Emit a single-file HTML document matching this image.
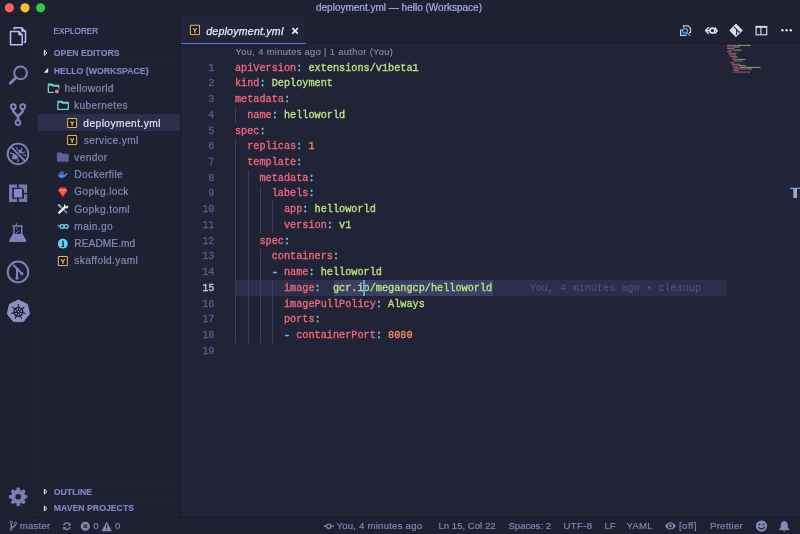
<!DOCTYPE html>
<html lang="en">
<head>
<meta charset="utf-8">
<title>deployment.yml — hello (Workspace)</title>
<style>
html,body{margin:0;padding:0;}
body{width:800px;height:534px;position:relative;overflow:hidden;background:#212337;font-family:"Liberation Sans",sans-serif;color:#828bb8;-webkit-font-smoothing:antialiased;}
.abs{position:absolute;}
#titlebar{left:0;top:0;width:800px;height:16px;background:#1e2132;border-bottom:1px solid #1a1c2c;box-sizing:border-box;}
#title{left:0;top:0;width:800px;height:16px;line-height:16px;text-align:center;padding-right:2px;box-sizing:border-box;font-size:10px;color:#a7afe3;-webkit-text-stroke:0.2px;white-space:nowrap;}
#activity{left:0;top:16px;width:37px;height:501px;background:#1e2132;}
#sidebar{left:37px;top:16px;width:143px;height:501px;background:#1e2132;border-left:1px solid #212438;box-sizing:border-box;}
#editor{left:180px;top:16px;width:620px;height:501px;background:#212337;border-left:1px solid #1a1c2b;box-sizing:border-box;}
#tabbar{left:181px;top:16px;width:619px;height:28px;background:#1e2132;border-bottom:1px solid #191a2a;box-sizing:border-box;}
#tab{left:181px;top:16px;width:124px;height:27px;background:#222438;border-right:1px solid #191a2a;}
#tabline{left:181px;top:42.6px;width:124.5px;height:1.4px;background:#5b78e0;}
#tabname{left:206.2px;top:22.6px;height:16px;line-height:16px;font-size:10.6px;font-style:italic;color:#e6eafd;-webkit-text-stroke:0.25px;letter-spacing:0.22px;white-space:nowrap;}
#status{left:0;top:517px;width:800px;height:17px;background:#1e2132;border-top:1px solid #191a2a;box-sizing:border-box;}
.st{top:516.6px;-webkit-text-stroke:0.15px;height:17px;line-height:17px;font-size:9.6px;color:#828bb8;white-space:nowrap;}
.hdr{-webkit-text-stroke:0.15px;left:53.8px;height:14px;line-height:14px;font-size:8.7px;font-weight:bold;color:#8088c0;white-space:nowrap;letter-spacing:0.02px;}
.row{height:17.3px;line-height:17.3px;-webkit-text-stroke:0.2px;font-size:10.2px;color:#828bb8;white-space:nowrap;letter-spacing:0.35px;}
.sep{left:38px;width:140px;height:1px;background:#212337;}
#sel{left:38px;top:114px;width:142px;height:17px;background:#2c2f4b;}
.code{font-family:"Liberation Mono",monospace;font-size:10.215px;white-space:pre;height:15.72px;line-height:15.72px;-webkit-text-stroke:0.3px;margin-top:0.8px;}
.ln{left:190px;width:24.4px;text-align:right;color:#555c8e;}
.cl{left:235px;}
.k{color:#f8687c;}
.p{color:#6cd6f5;}
.s{color:#bbe682;}
.n{color:#fb8c60;}
.d{-webkit-text-stroke:0.7px;color:#5ec3df;}
.guide{width:1px;background:#3a3f63;}
#lens{left:235.6px;top:44.5px;height:15px;line-height:15px;font-size:9.3px;color:#8e909f;-webkit-text-stroke:0.12px;white-space:nowrap;letter-spacing:0.35px;}
</style>
</head>
<body>
<div id="root" class="abs" style="left:0;top:0;width:800px;height:534px;will-change:transform;">
<div id="titlebar" class="abs"></div>
<div id="title" class="abs">deployment.yml — hello (Workspace)</div>

<div id="activity" class="abs"></div>
<div id="sidebar" class="abs"></div>
<div id="editor" class="abs"></div>
<div id="tabbar" class="abs"></div>
<div id="tab" class="abs"></div>
<div id="tabline" class="abs"></div>
<div id="tabname" class="abs">deployment.yml</div>

<!-- sidebar content -->
<div class="abs" style="left:53.6px;top:25.1px;height:14px;line-height:14px;font-size:8.2px;color:#959ddb;-webkit-text-stroke:0.2px;white-space:nowrap;">EXPLORER</div>
<div class="abs hdr" style="top:45.9px;">OPEN EDITORS</div>
<div class="abs sep" style="top:61px;"></div>
<div class="abs hdr" style="top:63.6px;">HELLO (WORKSPACE)</div>
<div id="sel" class="abs"></div>
<div class="abs row" style="left:64.5px;top:80.15px;">helloworld</div>
<div class="abs row" style="left:74px;top:97.15px;">kubernetes</div>
<div class="abs row" style="left:83.3px;top:115.15px;color:#dfe4fb;letter-spacing:0.45px;">deployment.yml</div>
<div class="abs row" style="left:83.8px;top:132.15px;">service.yml</div>
<div class="abs row" style="left:74.3px;top:149.15px;">vendor</div>
<div class="abs row" style="left:74.3px;top:166.15px;">Dockerfile</div>
<div class="abs row" style="left:74.3px;top:183.15px;">Gopkg.lock</div>
<div class="abs row" style="left:74.3px;top:201.15px;">Gopkg.toml</div>
<div class="abs row" style="left:74.3px;top:218.15px;">main.go</div>
<div class="abs row" style="left:74.3px;top:235.15px;letter-spacing:0.05px;">README.md</div>
<div class="abs row" style="left:74.3px;top:252.15px;">skaffold.yaml</div>
<div class="abs sep" style="top:483px;"></div>
<div class="abs hdr" style="top:484.5px;">OUTLINE</div>
<div class="abs sep" style="top:500px;"></div>
<div class="abs hdr" style="top:501.4px;">MAVEN PROJECTS</div>

<!-- editor content -->
<div id="lens" class="abs">You, 4 minutes ago | 1 author (You)</div>
<div class="abs" style="left:235.4px;top:280px;width:491.4px;height:15.7px;background:#2c2f4b;"></div>
<div class="abs" style="left:333.5px;top:280px;width:159.4px;height:15.7px;background:#3a4066;"></div>
<div class="abs guide" style="left:235.2px;top:107.1px;height:15.7px;"></div>
<div class="abs guide" style="left:235.2px;top:138.5px;height:204.4px;"></div>
<div class="abs guide" style="left:247.6px;top:169.9px;height:173px;"></div>
<div class="abs guide" style="left:259.9px;top:185.7px;height:47.2px;"></div>
<div class="abs guide" style="left:259.9px;top:248.5px;height:94.4px;"></div>
<div class="abs guide" style="left:272.2px;top:201.4px;height:31.5px;"></div>
<div class="abs guide" style="left:272.2px;top:280px;height:62.9px;"></div>
<div id="lines"></div>
<div class="abs code ln" style="top:59.92px">1</div>
<div class="abs code cl" style="top:59.92px"><span class="k">apiVersion</span><span class="p">:</span> <span class="s">extensions/v1beta1</span></div>
<div class="abs code ln" style="top:75.64px">2</div>
<div class="abs code cl" style="top:75.64px"><span class="k">kind</span><span class="p">:</span> <span class="s">Deployment</span></div>
<div class="abs code ln" style="top:91.36px">3</div>
<div class="abs code cl" style="top:91.36px"><span class="k">metadata</span><span class="p">:</span></div>
<div class="abs code ln" style="top:107.08px">4</div>
<div class="abs code cl" style="top:107.08px">  <span class="k">name</span><span class="p">:</span> <span class="s">helloworld</span></div>
<div class="abs code ln" style="top:122.8px">5</div>
<div class="abs code cl" style="top:122.8px"><span class="k">spec</span><span class="p">:</span></div>
<div class="abs code ln" style="top:138.52px">6</div>
<div class="abs code cl" style="top:138.52px">  <span class="k">replicas</span><span class="p">:</span> <span class="n">1</span></div>
<div class="abs code ln" style="top:154.24px">7</div>
<div class="abs code cl" style="top:154.24px">  <span class="k">template</span><span class="p">:</span></div>
<div class="abs code ln" style="top:169.96px">8</div>
<div class="abs code cl" style="top:169.96px">    <span class="k">metadata</span><span class="p">:</span></div>
<div class="abs code ln" style="top:185.68px">9</div>
<div class="abs code cl" style="top:185.68px">      <span class="k">labels</span><span class="p">:</span></div>
<div class="abs code ln" style="top:201.4px">10</div>
<div class="abs code cl" style="top:201.4px">        <span class="k">app</span><span class="p">:</span> <span class="s">helloworld</span></div>
<div class="abs code ln" style="top:217.12px">11</div>
<div class="abs code cl" style="top:217.12px">        <span class="k">version</span><span class="p">:</span> <span class="s">v1</span></div>
<div class="abs code ln" style="top:232.84px">12</div>
<div class="abs code cl" style="top:232.84px">    <span class="k">spec</span><span class="p">:</span></div>
<div class="abs code ln" style="top:248.56px">13</div>
<div class="abs code cl" style="top:248.56px">      <span class="k">containers</span><span class="p">:</span></div>
<div class="abs code ln" style="top:264.28px">14</div>
<div class="abs code cl" style="top:264.28px">      <span class="p d">-</span> <span class="k">name</span><span class="p">:</span> <span class="s">helloworld</span></div>
<div class="abs code ln" style="top:280px;color:#c8d0f5">15</div>
<div class="abs code cl" style="top:280px">        <span class="k">image</span><span class="p">:</span>  <span class="s">gcr.io/megangcp/helloworld</span></div>
<div class="abs code" style="top:280px;left:529.6px;color:#4c5277;-webkit-text-stroke:0.15px;">You, 4 minutes ago • cleanup</div>
<div class="abs code ln" style="top:295.72px">16</div>
<div class="abs code cl" style="top:295.72px">        <span class="k">imagePullPolicy</span><span class="p">:</span> <span class="s">Always</span></div>
<div class="abs code ln" style="top:311.44px">17</div>
<div class="abs code cl" style="top:311.44px">        <span class="k">ports</span><span class="p">:</span></div>
<div class="abs code ln" style="top:327.16px">18</div>
<div class="abs code cl" style="top:327.16px">        <span class="p d">-</span> <span class="k">containerPort</span><span class="p">:</span> <span class="n">8080</span></div>
<div class="abs code ln" style="top:342.88px">19</div>
<div class="abs" style="left:363.4px;top:280px;width:1.8px;height:15.7px;background:#6f9df5;"></div>

<!-- status bar -->
<div id="status" class="abs"></div>
<div class="abs st" style="left:19.7px;letter-spacing:0.25px;">master</div>
<div class="abs st" style="left:93.2px;">0</div>
<div class="abs st" style="left:115px;">0</div>
<div class="abs st" style="left:336.5px;letter-spacing:0.22px;">You, 4 minutes ago</div>
<div class="abs st" style="left:438.5px;">Ln 15, Col 22</div>
<div class="abs st" style="left:508.4px;">Spaces: 2</div>
<div class="abs st" style="left:563.6px;letter-spacing:0.3px;">UTF-8</div>
<div class="abs st" style="left:604.4px;">LF</div>
<div class="abs st" style="left:626.6px;letter-spacing:0.2px;">YAML</div>
<div class="abs st" style="left:679px;letter-spacing:0.45px;">[off]</div>
<div class="abs st" style="left:710px;letter-spacing:0.25px;">Prettier</div>

<!-- ICONS -->
<svg class="abs" style="left:0;top:0;" width="800" height="534" viewBox="0 0 800 534">
<!-- traffic lights -->
<circle cx="9.4" cy="7.8" r="4.6" fill="#fc605b"/>
<circle cx="25" cy="7.8" r="4.6" fill="#fdbc40"/>
<circle cx="40.6" cy="7.8" r="4.6" fill="#34c84a"/>

<!-- activity bar icons -->
<g fill="none" stroke="#b9bef7" stroke-width="1.5" stroke-linejoin="round">
  <path d="M14.2,29.6 V27.7 H21.6 L25.5,31.6 V42.2 H23.6"/>
  <path d="M21.6,27.7 V31.6 H25.5 Z" fill="#b9bef7" stroke-width="0.6"/>
  <path d="M10.5,31.4 H18.6 L22.2,35 V44.8 H10.5 Z"/>
  <path d="M18.6,31.4 V35 H22.2 Z" fill="#b9bef7" stroke-width="0.6"/>
</g>
<g fill="none" stroke="#7e84b9">
  <circle cx="20.6" cy="72.9" r="6.35" stroke-width="2"/>
  <path d="M15.9,77.7 L10.3,83.1" stroke-width="2.9" stroke-linecap="round"/>
</g>
<g fill="none" stroke="#7e84b9">
  <circle cx="13.35" cy="106.7" r="2.4" stroke-width="1.9"/>
  <circle cx="22.65" cy="106.7" r="2.4" stroke-width="1.9"/>
  <circle cx="18" cy="122.6" r="2.4" stroke-width="1.9"/>
  <path d="M13.35,109.6 V111.6 L18,116.4 V119.7 M22.65,109.6 V111.6 L18,116.4" stroke-width="2.6" stroke-linejoin="round"/>
</g>
<g fill="none" stroke="#7e84b9">
  <circle cx="18" cy="153.9" r="10.3" stroke-width="1.9"/>
  <g stroke-width="1.15" stroke-linecap="round">
    <ellipse cx="15.2" cy="156.5" rx="2.2" ry="2.4" fill="#7e84b9" transform="rotate(-45 15.2 156.5)"/>
    <circle cx="20.2" cy="151.7" r="1.5" fill="#7e84b9"/>
    <path d="M16.6,147.6 L17.6,150.4 M21.8,148.3 L20.7,150.4 M24.8,152 L22.4,152.8 M25.6,155.8 L23.4,154.6 M10.6,153.1 L13.2,153.9 M18,159 L18,161.8 M12.2,158.8 L13.4,158"/>
  </g>
  <path d="M11.8,147.8 L24.2,160.2" stroke="#1e2030" stroke-width="3.8"/>
  <path d="M10.8,146.7 L25.2,161.1" stroke-width="1.7"/>
</g>
<g fill="#747aac">
  <path d="M9,184.6 H17.1 V187.8 H12.3 V198.8 H17.1 V202 H9 Z"/>
  <path d="M18.8,184.6 H27.15 V192.9 H24 V190 L22,187.8 H18.8 Z"/>
  <path d="M18.8,198.8 H24 V194.2 H27.15 V202 H18.8 Z"/>
  <rect x="13.9" y="188.9" width="8.2" height="8.6" fill="#858bc0"/>
</g>
<g fill="#7e84b9" stroke="none">
  <rect x="15.7" y="223.3" width="1.2" height="2.2"/>
  <rect x="12.2" y="225.3" width="10.6" height="1.5" rx="0.5"/>
  <path d="M13.2,226.5 H14.6 V233.8 H21 V226.5 H22.4 V233.6 L26.3,240.6 Q26.6,242 25.2,242 H10.1 Q8.8,242 9.1,240.6 L13.2,233.6 Z"/>
  <rect x="16.2" y="228" width="1.1" height="1.1"/><rect x="17.4" y="230.5" width="1.2" height="1.2"/><rect x="16" y="232" width="1" height="1"/>
</g>
<g fill="none" stroke="#7e84b9">
  <circle cx="18" cy="271.9" r="10.3" stroke-width="2"/>
  <path d="M13.8,265.6 L17,268.6 V277.6 M17.2,268.8 L21.4,273.2" stroke-width="2" stroke-linecap="round"/>
  <circle cx="17" cy="278" r="1.3" fill="#7e84b9" stroke-width="0.8"/>
  <circle cx="21.8" cy="273.7" r="1.3" fill="#7e84b9" stroke-width="0.8"/>
</g>
<g>
  <path d="M18.4,300 L27.3,304.3 L29.5,313.9 L23.3,321.6 L13.5,321.6 L7.3,313.9 L9.5,304.3 Z" fill="#8a90c6" stroke="#8a90c6" stroke-width="1" stroke-linejoin="round"/>
  <g stroke="#1e2030" fill="none">
    <circle cx="18.4" cy="311.8" r="4.4" stroke-width="1.5"/>
    <path d="M18.40,310.50 L18.40,304.20 M19.42,310.99 L24.34,307.06 M19.67,312.09 L25.81,313.49 M18.96,312.97 L21.70,318.65 M17.84,312.97 L15.10,318.65 M17.13,312.09 L10.99,313.49 M17.38,310.99 L12.46,307.06 " stroke-width="1.15"/>
  </g>
  <circle cx="18.4" cy="311.8" r="1.7" fill="#1e2030"/>
<circle cx="18.4" cy="311.8" r="0.8" fill="#8a90c6"/>
</g>
<!-- gear -->
<g transform="translate(18.2,496.8)">
  <g fill="#797fb3">
    <circle r="7"/>
    <rect x="-1.75" y="-9.2" width="3.5" height="18.4" rx="1"/>
    <rect x="-1.75" y="-9.2" width="3.5" height="18.4" rx="1" transform="rotate(45)"/>
    <rect x="-1.75" y="-9.2" width="3.5" height="18.4" rx="1" transform="rotate(90)"/>
    <rect x="-1.75" y="-9.2" width="3.5" height="18.4" rx="1" transform="rotate(135)"/>
  </g>
  <circle r="2.8" fill="#1e2132"/>
</g>
<!-- file icons -->
<path d="M48.35,92.35 V84.20 H52.20 L53.40,85.30 H58.75 V92.35 Z" fill="#1a1b2c" stroke="#5ddcc6" stroke-width="1.3" stroke-linejoin="round"/><path d="M48.35,84.90 H52.40 L53.20,85.90 H58.75" fill="none" stroke="#5ddcc6" stroke-width="1.6"/>
<circle cx="56.9" cy="91.5" r="3.2" fill="#1a1b2c"/><circle cx="56.9" cy="91.5" r="2.05" fill="#fc6a9f"/>
<path d="M57.85,109.45 V101.30 H61.70 L62.90,102.40 H68.25 V109.45 Z" fill="#1a1b2c" stroke="#5ddcc6" stroke-width="1.3" stroke-linejoin="round"/><path d="M57.85,102.00 H61.90 L62.70,103.00 H68.25" fill="none" stroke="#5ddcc6" stroke-width="1.6"/><g><rect x="67.60" y="118.40" width="9.00" height="9.00" rx="0.5" fill="#171828" stroke="#e9b14f" stroke-width="1.05"/><text x="72.10" y="125.70" font-family="Liberation Sans, sans-serif" font-weight="bold" font-size="7.2" text-anchor="middle" fill="#f0c46c">Y</text></g><g><rect x="67.60" y="135.40" width="9.00" height="9.00" rx="0.5" fill="#171828" stroke="#e9b14f" stroke-width="1.05"/><text x="72.10" y="142.70" font-family="Liberation Sans, sans-serif" font-weight="bold" font-size="7.2" text-anchor="middle" fill="#f0c46c">Y</text></g><g><rect x="58.40" y="256.40" width="9.00" height="9.00" rx="0.5" fill="#171828" stroke="#e9b14f" stroke-width="1.05"/><text x="62.90" y="263.70" font-family="Liberation Sans, sans-serif" font-weight="bold" font-size="7.2" text-anchor="middle" fill="#f0c46c">Y</text></g><g><rect x="190.40" y="25.20" width="9.10" height="9.20" rx="0.5" fill="#171828" stroke="#e9b14f" stroke-width="1.05"/><text x="194.95" y="32.70" font-family="Liberation Sans, sans-serif" font-weight="bold" font-size="7.2" text-anchor="middle" fill="#f0c46c">Y</text></g>
<path d="M56.9,153.5 Q56.9,152.5 57.9,152.5 H61.4 L62.6,153.8 H67.7 Q68.7,153.8 68.7,154.8 V160.8 Q68.7,161.8 67.7,161.8 H57.9 Q56.9,161.8 56.9,160.8 Z" fill="#5d6390"/>
<!-- docker -->
<g fill="#3b8ff2">
  <path d="M58,174.4 H65.2 Q65.6,173 66.6,172.9 Q67,173.8 67.9,174 Q67.4,175 66.2,175.1 Q65,177.9 61.4,177.9 Q58.3,177.9 58,174.4 Z"/>
  <rect x="59" y="172.9" width="1.3" height="1.2"/><rect x="60.6" y="172.9" width="1.3" height="1.2"/><rect x="62.2" y="172.9" width="1.3" height="1.2"/><rect x="60.6" y="171.4" width="1.3" height="1.2"/><rect x="62.2" y="171.4" width="1.3" height="1.2"/>
</g>
<!-- gem -->
<g>
  <path d="M60.2,187.4 H65.4 L67.7,190.3 L62.8,196.9 L57.9,190.3 Z" fill="#f5413c"/>
  <path d="M59.4,190.2 H66.2" stroke="#ffb86b" stroke-width="0.9"/>
  <path d="M60.6,191.2 H65 L62.8,195 Z" fill="#ff6a5a"/>
</g>
<!-- tools -->
<g fill="none" stroke-linecap="round">
  <path d="M59.6,205.8 L66.6,212.6" stroke="#4f9aa5" stroke-width="1.8"/>
  <path d="M58.7,204.9 L60.4,206.6" stroke="#9fb4bd" stroke-width="1.9"/>
  <path d="M59.3,212.7 L65,207" stroke="#e9ebee" stroke-width="2.4"/>
  <path d="M64.4,205 Q63.9,207.4 66.4,208.2 Q68.1,207.7 68,205.9 L66.4,207 L65.2,205.9 Z" fill="#e9ebee" stroke="#e9ebee" stroke-width="1"/>
</g>
<!-- go -->
<g fill="none" stroke="#62d5f2">
  <ellipse cx="62.2" cy="226.5" rx="2" ry="1.8" stroke-width="1.3"/>
  <ellipse cx="66.2" cy="226.5" rx="2" ry="1.8" stroke-width="1.3"/>
  <path d="M57.4,225.4 H59.6 M58.2,227 H59.8" stroke-width="0.8"/>
</g>
<!-- info -->
<circle cx="62.8" cy="243.7" r="4.9" fill="#62d5f2"/>
<circle cx="62.8" cy="241.2" r="0.8" fill="#1a1b2c"/>
<path d="M61.8,242.9 H63.3 V246.3 M61.6,246.4 H64.2" stroke="#1a1b2c" stroke-width="1.1" fill="none"/>
<!-- arrows -->
<g fill="#23263a" stroke="#ffffff" stroke-width="0.95" stroke-linejoin="round">
  <path d="M44.4,50.5 L46.9,52.9 L44.4,55.3 Z"/>
  <path d="M44.4,489.2 L46.9,491.6 L44.4,494 Z"/>
  <path d="M44.4,506.1 L46.9,508.5 L44.4,510.9 Z"/>
</g>
<path d="M48.2,67.8 V72.8 H43.9 Z" fill="#e6e8f2"/>

<!-- tab close -->
<path d="M292.4,28.2 L297.8,33.6 M297.8,28.2 L292.4,33.6" stroke="#eef0fb" stroke-width="1.7" fill="none"/>
<!-- editor actions -->
<g fill="none" stroke="#c9ccdf" stroke-width="1.2" stroke-linejoin="round">
  <path d="M683.4,27.6 V25.8 H688.2 L690.5,28.2 V32.6 H689"/>
  <path d="M683,30 H680.6 V35.4 H686 V34.6"/>
</g>
<g fill="none" stroke="#4ba6f2" stroke-width="1.3" stroke-linecap="round">
  <circle cx="685.1" cy="30.8" r="2.4"/>
  <path d="M687,32.8 L690,35.6"/>
</g>
<g fill="none" stroke="#dfe2f3" stroke-width="1.4" stroke-linecap="round" stroke-linejoin="round">
  <path d="M708.4,27.8 L705.6,30.6 L708.4,33.4 M705.8,30.6 H709.4"/>
  <circle cx="712.4" cy="30.6" r="2.5" stroke-width="1.6"/>
  <path d="M715.2,28 L717.2,30.6 L715.2,33.2"/>
</g>
<g>
  <path d="M736,24.1 L742.3,30.4 L736,36.7 L729.7,30.4 Z" fill="#dfe2f3" stroke="#dfe2f3" stroke-width="0.8" stroke-linejoin="round"/>
  <path d="M734,27 L736.6,29.4 V34 M736.6,29.4 L739,31.8" stroke="#1e2030" stroke-width="1.1" fill="none"/>
  <circle cx="736.6" cy="34" r="0.9" fill="#1e2030"/><circle cx="739" cy="31.8" r="0.9" fill="#1e2030"/>
</g>
<g fill="none" stroke="#dfe2f3">
  <rect x="756.1" y="26.6" width="10.6" height="8.2" stroke-width="1.1"/>
  <path d="M755.6,26.8 H767.2" stroke-width="1.8"/>
  <path d="M760.9,26.6 V34.8" stroke-width="1.1"/>
</g>
<g fill="#dfe2f3"><circle cx="782.4" cy="30.3" r="1.2"/><circle cx="786.6" cy="30.3" r="1.2"/><circle cx="790.8" cy="30.3" r="1.2"/></g>
<!-- overview ruler -->
<rect x="793.3" y="189" width="3.7" height="9" fill="#a9a9ac"/>
<rect x="790" y="187.7" width="10" height="1.3" fill="#6ba0ff"/>
<!-- status icons -->
<g fill="none" stroke="#828bb8" stroke-width="1">
  <circle cx="11.3" cy="522.4" r="1.15"/><circle cx="11.3" cy="529.4" r="1.15"/><circle cx="15.5" cy="523.5" r="1.15"/>
  <path d="M11.3,523.6 V528.2 M15.5,524.7 Q15.4,526.6 11.5,527.6" stroke-width="1.3"/>
</g>
<g fill="none" stroke="#828bb8" stroke-width="1.3">
  <path d="M63.6,525.6 A3.4,3.4 0 0 1 69.6,524.2"/>
  <path d="M70.2,526.8 A3.4,3.4 0 0 1 64.2,528.2"/>
</g>
<path d="M70.6,522.4 V525.4 H67.6 Z M63.2,530 V527 H66.2 Z" fill="#828bb8"/>
<circle cx="85.3" cy="526.3" r="4.5" fill="#828bb8"/>
<path d="M83.4,524.4 L87.2,528.2 M87.2,524.4 L83.4,528.2" stroke="#1e2030" stroke-width="1.2"/>
<path d="M106.7,522 L111.4,530.9 H102 Z" fill="#828bb8" stroke="#828bb8" stroke-width="0.6" stroke-linejoin="round"/>
<path d="M106.7,524.6 V528" stroke="#1e2030" stroke-width="1.1"/><circle cx="106.7" cy="529.4" r="0.6" fill="#1e2030"/>
<g fill="none" stroke="#828bb8" stroke-width="1.2">
  <circle cx="328.8" cy="526.2" r="2.2"/>
  <path d="M323.6,526.2 H326.6 M331,526.2 H334"/>
</g>
<path d="M664.9,525.9 Q670.5,518.6 676.1,525.9 Q670.5,533.2 664.9,525.9 Z" fill="#828bb8"/>
<circle cx="670.5" cy="525.9" r="2.5" fill="#1e2030"/><circle cx="670.5" cy="525.9" r="1.3" fill="#828bb8"/>
<circle cx="761.5" cy="526" r="5.6" fill="#828bb8"/>
<circle cx="759.5" cy="524.4" r="0.9" fill="#1e2030"/><circle cx="763.5" cy="524.4" r="0.9" fill="#1e2030"/>
<path d="M758.4,527.2 Q761.5,531 764.6,527.2" fill="none" stroke="#1e2030" stroke-width="1.1"/>
<path d="M784.25,521 Q787.8,521.6 787.8,525.6 V527.6 L789.5,529.4 V530 H779 V529.4 L780.7,527.6 V525.6 Q780.7,521.6 784.25,521 Z" fill="#828bb8"/>
<rect x="783.2" y="530.4" width="2.1" height="1.1" fill="#828bb8"/>
<!-- minimap -->
<g opacity="0.62">
<rect x="727.00" y="44.85" width="8.00" height="1.05" fill="#ff757f"/><rect x="735.00" y="44.85" width="0.80" height="1.05" fill="#86e1fc"/><rect x="736.60" y="44.85" width="14.40" height="1.05" fill="#c3e88d"/>
<rect x="727.00" y="46.42" width="3.20" height="1.05" fill="#ff757f"/><rect x="730.20" y="46.42" width="0.80" height="1.05" fill="#86e1fc"/><rect x="731.80" y="46.42" width="8.00" height="1.05" fill="#c3e88d"/>
<rect x="727.00" y="47.99" width="6.40" height="1.05" fill="#ff757f"/><rect x="733.40" y="47.99" width="0.80" height="1.05" fill="#86e1fc"/>
<rect x="728.60" y="49.57" width="3.20" height="1.05" fill="#ff757f"/><rect x="731.80" y="49.57" width="0.80" height="1.05" fill="#86e1fc"/><rect x="733.40" y="49.57" width="8.00" height="1.05" fill="#c3e88d"/>
<rect x="727.00" y="51.14" width="3.20" height="1.05" fill="#ff757f"/><rect x="730.20" y="51.14" width="0.80" height="1.05" fill="#86e1fc"/>
<rect x="728.60" y="52.71" width="6.40" height="1.05" fill="#ff757f"/><rect x="735.00" y="52.71" width="0.80" height="1.05" fill="#86e1fc"/><rect x="736.60" y="52.71" width="0.80" height="1.05" fill="#ff966c"/>
<rect x="728.60" y="54.28" width="6.40" height="1.05" fill="#ff757f"/><rect x="735.00" y="54.28" width="0.80" height="1.05" fill="#86e1fc"/>
<rect x="730.20" y="55.85" width="6.40" height="1.05" fill="#ff757f"/><rect x="736.60" y="55.85" width="0.80" height="1.05" fill="#86e1fc"/>
<rect x="731.80" y="57.43" width="4.80" height="1.05" fill="#ff757f"/><rect x="736.60" y="57.43" width="0.80" height="1.05" fill="#86e1fc"/>
<rect x="733.40" y="59.00" width="2.40" height="1.05" fill="#ff757f"/><rect x="735.80" y="59.00" width="0.80" height="1.05" fill="#86e1fc"/><rect x="737.40" y="59.00" width="8.00" height="1.05" fill="#c3e88d"/>
<rect x="733.40" y="60.57" width="5.60" height="1.05" fill="#ff757f"/><rect x="739.00" y="60.57" width="0.80" height="1.05" fill="#86e1fc"/><rect x="740.60" y="60.57" width="1.60" height="1.05" fill="#c3e88d"/>
<rect x="730.20" y="62.14" width="3.20" height="1.05" fill="#ff757f"/><rect x="733.40" y="62.14" width="0.80" height="1.05" fill="#86e1fc"/>
<rect x="731.80" y="63.71" width="8.00" height="1.05" fill="#ff757f"/><rect x="739.80" y="63.71" width="0.80" height="1.05" fill="#86e1fc"/>
<rect x="731.80" y="65.29" width="0.80" height="1.05" fill="#86e1fc"/><rect x="733.40" y="65.29" width="3.20" height="1.05" fill="#ff757f"/><rect x="736.60" y="65.29" width="0.80" height="1.05" fill="#86e1fc"/><rect x="738.20" y="65.29" width="8.00" height="1.05" fill="#c3e88d"/>
<rect x="733.40" y="66.86" width="4.00" height="1.05" fill="#ff757f"/><rect x="737.40" y="66.86" width="0.80" height="1.05" fill="#86e1fc"/><rect x="739.80" y="66.86" width="20.80" height="1.05" fill="#c3e88d"/>
<rect x="733.40" y="68.43" width="12.00" height="1.05" fill="#ff757f"/><rect x="745.40" y="68.43" width="0.80" height="1.05" fill="#86e1fc"/><rect x="747.00" y="68.43" width="4.80" height="1.05" fill="#c3e88d"/>
<rect x="733.40" y="70.00" width="4.00" height="1.05" fill="#ff757f"/><rect x="737.40" y="70.00" width="0.80" height="1.05" fill="#86e1fc"/>
<rect x="733.40" y="71.57" width="0.80" height="1.05" fill="#86e1fc"/><rect x="735.00" y="71.57" width="10.40" height="1.05" fill="#ff757f"/><rect x="745.40" y="71.57" width="0.80" height="1.05" fill="#86e1fc"/><rect x="747.00" y="71.57" width="3.20" height="1.05" fill="#ff966c"/>
</g>
</svg>
</div>
</body>
</html>
